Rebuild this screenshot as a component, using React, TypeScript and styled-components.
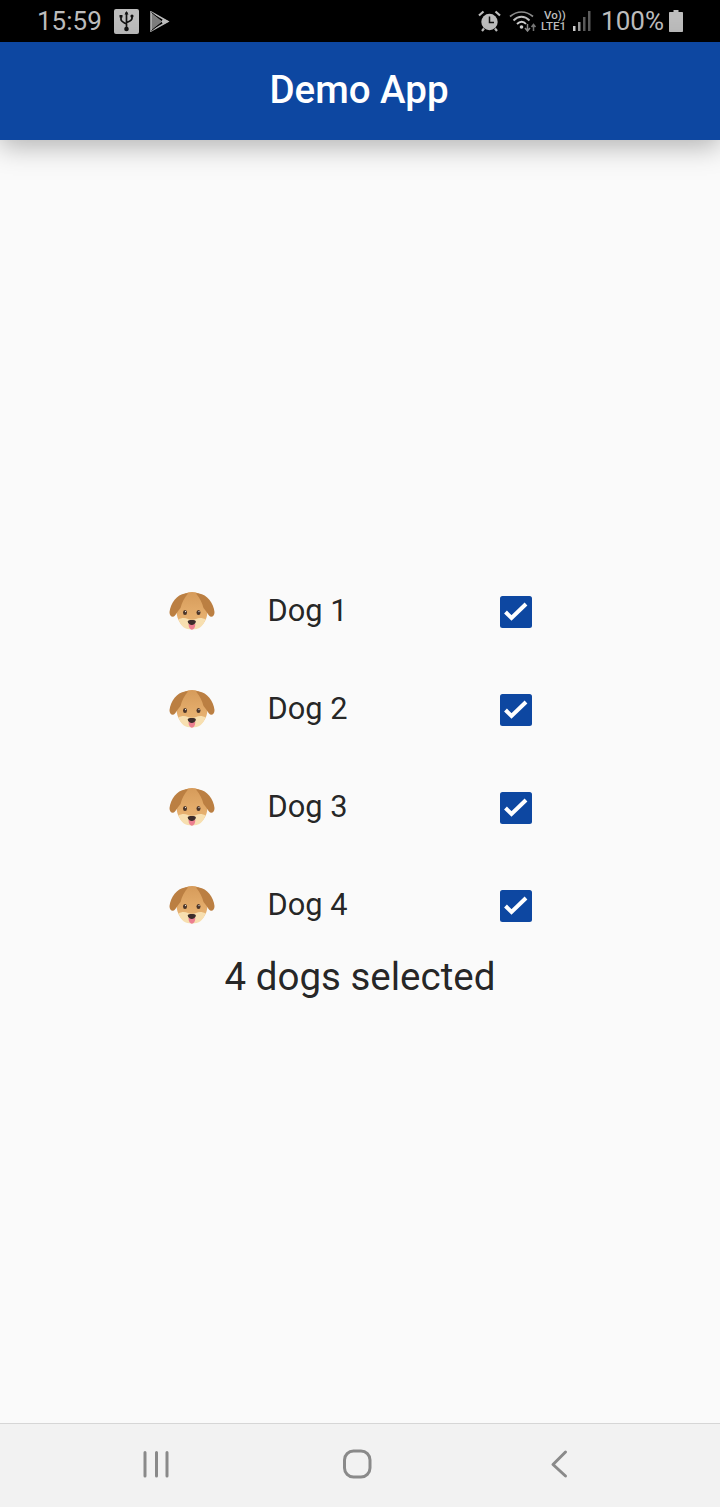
import React from "react";
import styled, { createGlobalStyle } from "styled-components";

const Global = createGlobalStyle`
  html, body { margin: 0; padding: 0; background: #fafafa; }
  * { box-sizing: border-box; }
`;

const Page = styled.div`
  width: 720px;
  height: 1507px;
  display: flex;
  flex-direction: column;
  background: #fafafa;
  font-family: Roboto, "Liberation Sans", sans-serif;
  overflow: hidden;
`;

const StatusBar = styled.header`
  height: 42px;
  flex: none;
  background: #000;
  color: #bdbdbd;
  display: flex;
  align-items: center;
  justify-content: space-between;
  padding: 0 37px 0 37px;
  font-size: 26px;
`;

const StatusGroup = styled.div`
  display: flex;
  align-items: center;
`;

const StatusIcon = styled.svg<{ $ml?: number }>`
  display: block;
  flex: none;
  margin-left: ${(p) => p.$ml ?? 0}px;
`;

const StatusText = styled.span<{ $ml?: number }>`
  margin-left: ${(p) => p.$ml ?? 0}px;
  line-height: 42px;
`;

const NetworkLabel = styled.div`
  margin-left: 4px;
  width: 27px;
  display: flex;
  flex-direction: column;
  font-size: 11.5px;
  line-height: 11px;
  font-weight: 500;
  color: #bdbdbd;
  white-space: nowrap;
  span:first-child { padding-left: 3px; }
`;

const AppBar = styled.div`
  height: 98px;
  flex: none;
  position: relative;
  z-index: 1;
  background: #0d47a1;
  color: #fff;
  display: flex;
  align-items: center;
  justify-content: center;
  padding: 0 2px 4px 0;
  font-size: 38.5px;
  font-weight: 500;
  box-shadow: 0 6px 26px rgba(0, 0, 0, 0.3);
`;

const Main = styled.main`
  flex: 1;
  display: flex;
  flex-direction: column;
  align-items: center;
  justify-content: center;
  color: rgba(0, 0, 0, 0.87);
`;

const DogRow = styled.div`
  width: 432px;
  height: 98px;
  display: grid;
  grid-template-columns: 48px 1fr 32px;
  column-gap: 51.5px;
  padding: 0 44px 0 24px;
  align-items: center;
  font-size: 30.8px;
`;

const Label = styled.span`
  line-height: 98px;
`;

const Check = styled.svg`
  display: block;
  position: relative;
  top: 1px;
`;

const Summary = styled.div`
  font-size: 38.5px;
  line-height: 45px;
  padding-bottom: 2px;
`;

const NavBar = styled.nav`
  height: 84px;
  flex: none;
  background: #f2f2f2;
  border-top: 1px solid #d6d6d6;
  display: flex;
  align-items: center;
  padding: 0 0 4px 136px;
  gap: 162px;
`;

const NavIcon = styled.svg`
  display: block;
  flex: none;
`;

const DogFace = () => (
  <svg width="48" height="48" viewBox="0 1 48 48" style={{ display: "block" }}>
    <defs>
      <linearGradient id="dogHead" x1="0" y1="0" x2="0" y2="1">
        <stop offset="0" stopColor="#d69b5a" />
        <stop offset="0.6" stopColor="#e4ad6c" />
        <stop offset="1" stopColor="#eab878" />
      </linearGradient>
    </defs>
    <path d="M24 6C14.500 6 8.500 14 8.500 25C8.500 35 15 43 24 43C33 43 39.500 35 39.500 25C39.500 14 33.500 6 24 6Z" fill="url(#dogHead)" />
    <path d="M10.500 33.500C13.500 31.500 17 31.500 20 33C22 34 26 34 28 33C31 31.500 34.500 31.500 37.500 33.500C35 40.500 31 43.500 24 43.500C17 43.500 13 40.500 10.500 33.500Z" fill="#f7dfb0" />
    <path d="M17 7.500C9 8.500 2.500 17 1.500 26C1.300 30.500 5 32 7 29.500C9 27 10.500 24 12.500 22C14 16.500 16 12 20 7.500C19 7.200 18 7.300 17 7.500Z" fill="#bb7f42" />
    <path d="M31 7.500C39 8.500 45.500 17 46.500 26C46.700 30.500 43 32 41 29.500C39 27 37.500 24 35.500 22C34 16.500 32 12 28 7.500C29 7.200 30 7.300 31 7.500Z" fill="#bb7f42" />
    <ellipse cx="17" cy="26.500" rx="2" ry="2.500" fill="#4a3428" />
    <ellipse cx="30.500" cy="26.500" rx="2" ry="2.500" fill="#4a3428" />
    <circle cx="17.500" cy="25.600" r="0.600" fill="#fff" />
    <circle cx="31" cy="25.600" r="0.600" fill="#fff" />
    <path d="M20.500 38C20.500 45.500 27.300 45.500 27.300 38Z" fill="#ec7f90" />
    <path d="M19.800 35.500C19.800 33.600 27.800 33.600 27.800 35.500C27.800 37.500 25.500 39 23.800 39C22 39 19.800 37.500 19.800 35.500Z" fill="#3c2c2a" />
  </svg>
);

const CheckBox = () => (
  <Check width="32" height="32" viewBox="0 0 32 32">
    <rect width="32" height="32" rx="2.500" fill="#0d47a1" />
    <path d="M5.500 16L11.500 22L26 8" fill="none" stroke="#fff" strokeWidth="4" />
  </Check>
);

const dogs = ["Dog 1", "Dog 2", "Dog 3", "Dog 4"];

export default function App() {
  return (
    <Page>
      <Global />
      <StatusBar>
        <StatusGroup>
          <StatusText>15:59</StatusText>
          <StatusIcon $ml={12} width="25" height="25" viewBox="0 0 25 25">
            <rect width="25" height="25" rx="2" fill="#bdbdbd" />
            <path d="M12.500 3V20M7 7V10.500C7 12.500 9 13 12.500 15M18 7V9.500C18 11.500 16 12 12.500 13.500" fill="none" stroke="#111" strokeWidth="1.700" />
            <path d="M12.500 2L10.500 5.500H14.500Z M5.500 6H8.500V8.500H5.500Z" fill="#111" />
            <circle cx="18" cy="7" r="1.600" fill="#111" />
            <circle cx="12.500" cy="20" r="2.300" fill="#111" />
          </StatusIcon>
          <StatusIcon $ml={11} width="20" height="21" viewBox="0 0 20 21">
            <path d="M1 1L13 10.500L1 20Z" fill="#7d7d7d" />
            <path d="M1 1L18 10.500L1 20Z" fill="none" stroke="#bdbdbd" strokeWidth="1.500" />
            <path d="M1.500 1.500L13 10.500L1.500 19.500" fill="none" stroke="#000" strokeWidth="1" />
            <path d="M13 7.500L19 10.500L13 13.500L11.500 10.500Z" fill="#bdbdbd" />
          </StatusIcon>
        </StatusGroup>
        <StatusGroup>
          <StatusIcon width="23" height="22" viewBox="0 0 23 22">
            <circle cx="11.500" cy="12" r="8.200" fill="#bdbdbd" />
            <path d="M11.500 6.500V12.500H16" fill="none" stroke="#111" strokeWidth="1.500" />
            <path d="M1 5.500L5.500 1.500M22 5.500L17.500 1.500M4 21L6 18.500M19 21L17 18.500" stroke="#bdbdbd" strokeWidth="2.200" fill="none" />
          </StatusIcon>
          <StatusIcon $ml={8} width="28" height="22" viewBox="0 0 28 22">
            <path d="M1 6.500C8 0.500 17 0.500 24 6.500" fill="none" stroke="#8c8c8c" strokeWidth="1.700" />
            <path d="M4.500 10.500C9.500 5.500 15.500 5.500 20.500 10.500" fill="none" stroke="#bdbdbd" strokeWidth="1.900" />
            <path d="M8 14C11 11 14.500 11 17 14" fill="none" stroke="#d0d0d0" strokeWidth="1.900" />
            <circle cx="12.500" cy="17" r="1.800" fill="#d0d0d0" />
            <path d="M18.500 14V20M16 18L18.500 21L21 18" fill="none" stroke="#8c8c8c" strokeWidth="1.500" />
            <path d="M24.500 21V15M22.500 17L24.500 14.500L26.500 17" fill="none" stroke="#777" strokeWidth="1.500" />
          </StatusIcon>
          <NetworkLabel>
            <span>Vo))</span>
            <span>LTE1</span>
          </NetworkLabel>
          <StatusIcon $ml={4} width="19" height="22" viewBox="0 0 19 22">
            <rect x="1" y="16" width="2.500" height="5" fill="#d0d0d0" />
            <rect x="6" y="12" width="2.500" height="9" fill="#9a9a9a" />
            <rect x="11" y="7" width="2.500" height="14" fill="#5c5c5c" />
            <rect x="16" y="1" width="2.500" height="20" fill="#5c5c5c" />
          </StatusIcon>
          <StatusText $ml={10}>100%</StatusText>
          <StatusIcon $ml={5} width="14" height="22" viewBox="0 0 14 22">
            <path d="M4.500 0H9.500V2H13C13.600 2 14 2.400 14 3V21C14 21.600 13.600 22 13 22H1C0.400 22 0 21.600 0 21V3C0 2.400 0.400 2 1 2H4.500Z" fill="#bdbdbd" />
          </StatusIcon>
        </StatusGroup>
      </StatusBar>

      <AppBar>Demo App</AppBar>

      <Main>
        {dogs.map((dog) => (
          <DogRow key={dog}>
            <DogFace />
            <Label>{dog}</Label>
            <CheckBox />
          </DogRow>
        ))}
        <Summary>4 dogs selected</Summary>
      </Main>

      <NavBar>
        <NavIcon width="40" height="40" viewBox="0 0 40 40">
          <path d="M9 8.500V32M20.500 8.500V32M31 8.500V32" fill="none" stroke="#8a8a8a" strokeWidth="3" strokeLinecap="round" />
        </NavIcon>
        <NavIcon width="40" height="40" viewBox="0 0 40 40">
          <rect x="6.500" y="7" width="25.500" height="26" rx="9" fill="none" stroke="#8a8a8a" strokeWidth="3" />
        </NavIcon>
        <NavIcon width="40" height="40" viewBox="0 0 40 40">
          <path d="M25.500 8L13 20.500L25.500 32" fill="none" stroke="#8a8a8a" strokeWidth="3" strokeLinecap="round" strokeLinejoin="round" />
        </NavIcon>
      </NavBar>
    </Page>
  );
}
